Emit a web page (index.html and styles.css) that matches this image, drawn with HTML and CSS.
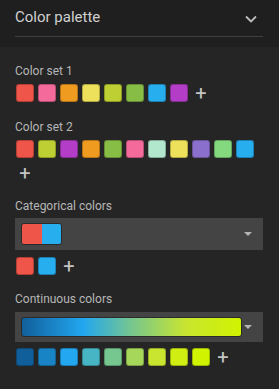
FILE: index.html
```html
<!DOCTYPE html>
<html lang="en">
<head>
  <meta charset="UTF-8" />
  <title>Color palette</title>
  <link rel="stylesheet" href="styles.css">
</head>
<body>
  <div class="panel">
    <!-- Header -->
    <div class="panel-head">
      <div class="panel-title">
        <span>Color palette</span>
        <svg class="chevron" width="12" height="8" viewBox="0 0 12 8"><path d="M1 1.5 L6 6.5 L11 1.5" fill="none" stroke="#bdbdbd" stroke-width="1.8"/></svg>
      </div>
    </div>

    <div class="panel-body">
      <div class="group">
        <div class="label">Color set 1</div>
        <div class="swatches">
          <span class="sw" style="background:#ef5548"></span>
          <span class="sw" style="background:#f46a9b"></span>
          <span class="sw" style="background:#ef9b20"></span>
          <span class="sw" style="background:#ede15b"></span>
          <span class="sw" style="background:#bdcf32"></span>
          <span class="sw" style="background:#87bc45"></span>
          <span class="sw" style="background:#27aeef"></span>
          <span class="sw" style="background:#b33dc6"></span>
          <span class="add">+</span>
        </div>
      </div>

      <div class="group">
        <div class="label">Color set 2</div>
        <div class="swatches">
          <span class="sw" style="background:#ef5548"></span>
          <span class="sw" style="background:#bdcf32"></span>
          <span class="sw" style="background:#b33dc6"></span>
          <span class="sw" style="background:#ef9b20"></span>
          <span class="sw" style="background:#87bc45"></span>
          <span class="sw" style="background:#f46a9b"></span>
          <span class="sw" style="background:#b2e6cd"></span>
          <span class="sw" style="background:#ede15b"></span>
          <span class="sw" style="background:#8a70cc"></span>
          <span class="sw" style="background:#84d87e"></span>
          <span class="sw" style="background:#27aeef"></span>
          <span class="add">+</span>
        </div>
      </div>

      <div class="group">
        <div class="label tight">Categorical colors</div>
        <div class="select">
          <div class="preview cat">
            <span style="background:#ef5548"></span>
            <span style="background:#27aeef"></span>
          </div>
          <span class="caret"></span>
        </div>
        <div class="swatches">
          <span class="sw" style="background:#ef5548"></span>
          <span class="sw" style="background:#27aeef"></span>
          <span class="add">+</span>
        </div>
      </div>

      <div class="group">
        <div class="label">Continuous colors</div>
        <div class="select short">
          <div class="preview grad"></div>
          <span class="caret"></span>
        </div>
        <div class="swatches">
          <span class="sw" style="background:#115f9a"></span>
          <span class="sw" style="background:#1984c5"></span>
          <span class="sw" style="background:#22a7f0"></span>
          <span class="sw" style="background:#48b5c4"></span>
          <span class="sw" style="background:#76c68f"></span>
          <span class="sw" style="background:#a6d75b"></span>
          <span class="sw" style="background:#c9e52f"></span>
          <span class="sw" style="background:#d0ee11"></span>
          <span class="sw" style="background:#d0f400"></span>
          <span class="add">+</span>
        </div>
      </div>
    </div>
  </div>
</body>
</html>
```

FILE: styles.css
```css
body, html {
  margin: 0;
  padding: 0;
  background: #252525;
  font-family: Roboto, "Liberation Sans", sans-serif;
}
.panel-head {
  background: #1f1f1f;
  padding: 0 16px 0 15px;
  height: 47px;
}
.panel-title {
  display: flex;
  align-items: center;
  justify-content: space-between;
  height: 36px;
  border-bottom: 1px solid #3f3f3f;
  color: #d0d0d0;
  font-size: 15px;
}
.panel-title span {
  position: relative;
  top: -1px;
}
.chevron {
  margin-right: 6px;
  position: relative;
  top: 1px;
}
.panel-body {
  padding: 16px 16px 0 15px;
}
.group {
  margin-bottom: 16px;
}
.group:first-child {
  margin-bottom: 17px;
}
.label {
  color: #b6b6b6;
  font-size: 12px;
  line-height: 16px;
  margin-bottom: 5px;
}
.label.tight {
  margin-bottom: 4px;
}
.swatches {
  display: flex;
  flex-wrap: wrap;
  align-items: center;
  gap: 6px 4px;
  padding-left: 1px;
}
.sw {
  width: 18px;
  height: 18px;
  border-radius: 3px;
  box-sizing: border-box;
  border: 1px solid rgba(0,0,0,0.25);
}
.add {
  color: #c4c4c4;
  font-size: 20px;
  line-height: 18px;
  width: 18px;
  text-align: center;
}
.select {
  display: flex;
  align-items: center;
  background: #444444;
  height: 32px;
  padding: 0 10px 0 6px;
  margin-bottom: 7px;
}
.select.short {
  height: 30px;
  margin-bottom: 6px;
}
.preview {
  box-sizing: border-box;
  border: 1px solid #2a2a2a;
  border-radius: 3px;
  overflow: hidden;
}
.preview.cat {
  display: flex;
  width: 41px;
  height: 22px;
}
.preview.cat span {
  flex: 1;
}
.preview.grad {
  width: 221px;
  height: 20px;
  background: linear-gradient(to right, #115f9a, #22a7f0 28%, #76c68f 50%, #c9e52f 75%, #d0f400);
}
.caret {
  margin-left: auto;
  margin-right: 1px;
  width: 0;
  height: 0;
  border-left: 4px solid transparent;
  border-right: 4px solid transparent;
  border-top: 4px solid #b4b4b4;
}
```
